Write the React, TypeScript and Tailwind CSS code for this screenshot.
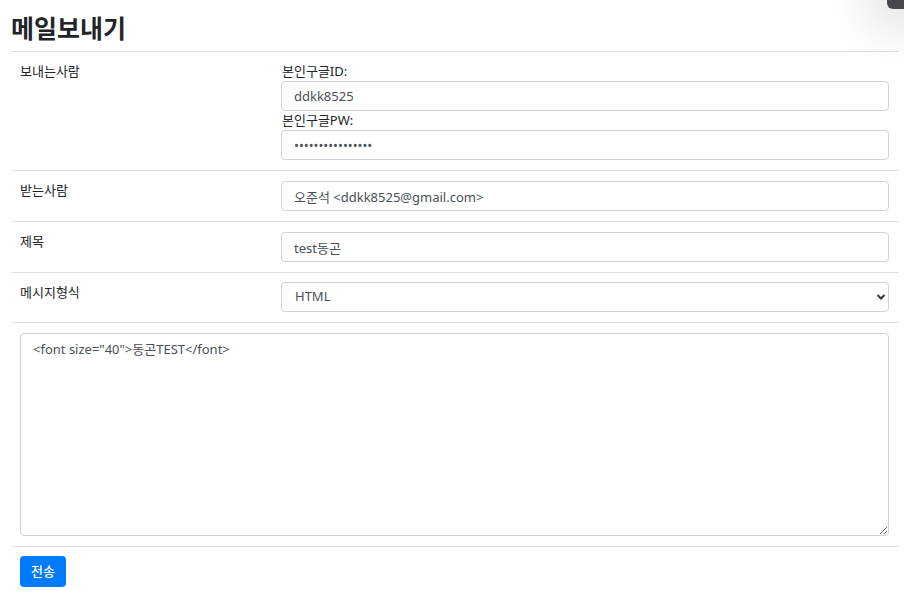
import React from 'react';

const font = { fontFamily: '"Noto Sans", "Noto Sans CJK KR", sans-serif' };

const inputCls =
  'block w-full h-[30px] px-[12px] border border-[#ced4da] rounded-[4px] bg-white text-[13px] text-[#495057] outline-none';

const Row = ({
  label,
  children,
  pad = 'pt-[10px] pb-[10px]',
}: {
  label: string;
  children: React.ReactNode;
  pad?: string;
}) => (
  <div className="flex border-t border-[#dee2e6]">
    <div className="w-[261px] shrink-0 px-[9px] pt-[10px] pb-[10px] text-[13px] leading-[19px] text-[#212529]">
      {label}
    </div>
    <div className={`flex-1 px-[9px] pr-[10px] ${pad}`}>{children}</div>
  </div>
);

export default function App() {
  return (
    <div className="relative min-h-[603px] bg-white overflow-hidden" style={font}>
      {/* browser extension peeking in at the corner */}
      <div className="absolute top-[-12px] right-[-12px] w-[29px] h-[21px] rounded-[6px] bg-[#45474d] shadow-[0_0_45px_22px_rgba(0,0,0,0.10)]" />

      <div className="px-[11px] pr-[5px]">
        <h1 className="pt-[12px] pb-[7px] text-[25px] leading-[32px] font-bold text-[#212529]">메일보내기</h1>

        <div className="text-[#212529]">
          <Row label="보내는사람">
            <div className="text-[13px] leading-[19px] pl-[1px]">본인구글ID:</div>
            <input className={inputCls} defaultValue="ddkk8525" />
            <div className="text-[13px] leading-[19px] pl-[1px]">본인구글PW:</div>
            <input className={inputCls} type="password" defaultValue="dongon1234567890" />
          </Row>

          <Row label="받는사람">
            <input className={inputCls} defaultValue="오준석 <ddkk8525@gmail.com>" />
          </Row>

          <Row label="제목">
            <input className={inputCls} defaultValue="test동곤" />
          </Row>

          <Row label="메시지형식" pad="pt-[9px] pb-[10px]">
            <div className="relative">
              <select
                className="block w-full h-[30px] pl-[13px] pr-[28px] border border-[#ced4da] rounded-[4px] bg-white text-[13px] text-[#495057] appearance-none outline-none"
                defaultValue="HTML"
              >
                <option>HTML</option>
                <option>TEXT</option>
              </select>
              <svg
                className="absolute right-[3px] top-[11px] pointer-events-none"
                width="10"
                height="8"
                viewBox="0 0 10 8"
              >
                <path d="M1.5 2 L5 5.5 L8.5 2" fill="none" stroke="#343a40" strokeWidth="2" />
              </svg>
            </div>
          </Row>

          <div className="border-t border-[#dee2e6] px-[9px] pr-[10px] py-[10px]">
            <textarea
              className="block w-full h-[203px] px-[12px] py-[5px] border border-[#ced4da] rounded-[4px] text-[13px] leading-[20px] text-[#495057] outline-none"
              defaultValue={'<font size="40">동곤TEST</font>'}
            />
          </div>

          <div className="border-t border-[#dee2e6] px-[9px] pt-[9px]">
            <button className="h-[31px] px-[11px] rounded-[4px] bg-[#007bff] text-white text-[13px] font-medium">
              전송
            </button>
          </div>
        </div>
      </div>
    </div>
  );
}
